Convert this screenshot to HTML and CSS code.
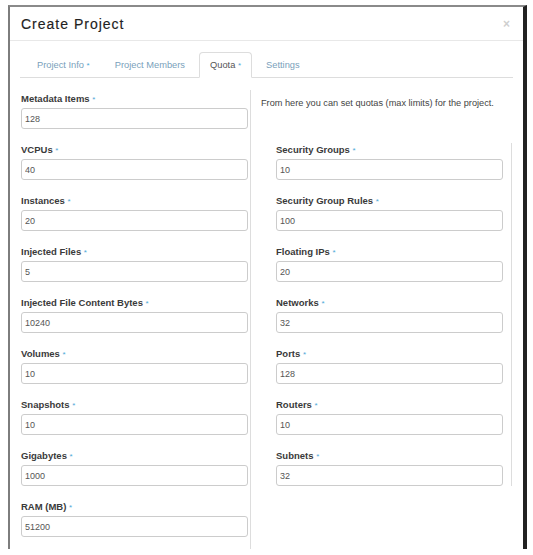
FILE: index.html
```html
<!DOCTYPE html>
<html>
<head>
<meta charset="utf-8">
<link rel="stylesheet" href="styles.css">
</head>
<body>
<div class="modal">
  <div class="modal-header">
    <h3 class="title">Create Project</h3>
    <span class="close">&times;</span>
  </div>
  <ul class="tabs">
    <li class="tab">Project Info <span class="req">*</span></li>
    <li class="tab">Project Members</li>
    <li class="tab active">Quota <span class="req">*</span></li>
    <li class="tab">Settings</li>
  </ul>
  <div class="content">
    <div class="col-left">
      <div class="group"><label class="label">Metadata Items <span class="req">*</span></label><input class="input" value="128"></div>
      <div class="group"><label class="label">VCPUs <span class="req">*</span></label><input class="input" value="40"></div>
      <div class="group"><label class="label">Instances <span class="req">*</span></label><input class="input" value="20"></div>
      <div class="group"><label class="label">Injected Files <span class="req">*</span></label><input class="input" value="5"></div>
      <div class="group"><label class="label">Injected File Content Bytes <span class="req">*</span></label><input class="input" value="10240"></div>
      <div class="group"><label class="label">Volumes <span class="req">*</span></label><input class="input" value="10"></div>
      <div class="group"><label class="label">Snapshots <span class="req">*</span></label><input class="input" value="10"></div>
      <div class="group"><label class="label">Gigabytes <span class="req">*</span></label><input class="input" value="1000"></div>
      <div class="group"><label class="label">RAM (MB) <span class="req">*</span></label><input class="input" value="51200"></div>
    </div>
    <div class="col-right">
      <p class="desc">From here you can set quotas (max limits) for the project.</p>
      <div class="fields">
        <div class="group"><label class="label">Security Groups <span class="req">*</span></label><input class="input" value="10"></div>
        <div class="group"><label class="label">Security Group Rules <span class="req">*</span></label><input class="input" value="100"></div>
        <div class="group"><label class="label">Floating IPs <span class="req">*</span></label><input class="input" value="20"></div>
        <div class="group"><label class="label">Networks <span class="req">*</span></label><input class="input" value="32"></div>
        <div class="group"><label class="label">Ports <span class="req">*</span></label><input class="input" value="128"></div>
        <div class="group"><label class="label">Routers <span class="req">*</span></label><input class="input" value="10"></div>
        <div class="group"><label class="label">Subnets <span class="req">*</span></label><input class="input" value="32"></div>
      </div>
    </div>
  </div>
</div>
</body>
</html>
```
FILE: styles.css
```css
html, body {
  margin: 0;
  padding: 0;
  background: #fff;
  font-family: "Liberation Sans", Arial, sans-serif;
}

.modal {
  margin: 5px 0 0 8px;
  width: 513px;
  height: 542px;
  border-top: 2px solid #8a8a8a;
  border-left: 2px solid #7d7d7d;
  border-right: 4px solid #222;
  display: flex;
  flex-direction: column;
  overflow: hidden;
  background: #fff;
}

.modal-header {
  height: 33px;
  border-bottom: 1px solid #e8e8e8;
  display: flex;
  align-items: center;
  justify-content: space-between;
  padding: 0 13px 0 11px;
  flex: none;
}

.title {
  margin: 0;
  font-size: 14px;
  font-weight: normal;
  letter-spacing: 1px;
  color: #222;
  -webkit-text-stroke: 0.15px #222;
}

.close {
  font-size: 12px;
  font-weight: bold;
  color: #cfcfcf;
  line-height: 1;
}

.tabs {
  list-style: none;
  margin: 11px 10px 0 10px;
  padding: 0 0 0 6px;
  display: flex;
  gap: 3px;
  border-bottom: 1px solid #ddd;
  height: 25px;
  flex: none;
}

.tab {
  font-size: 9.3px;
  color: #7a9fbb;
  padding: 0 10px;
  line-height: 24px;
  border: 1px solid transparent;
  border-radius: 4px 4px 0 0;
  margin-bottom: -1px;
}

.tab.active {
  color: #555;
  border-color: #ddd #ddd transparent #ddd;
  background: #fff;
}

.req {
  color: #4fa8d8;
  font-weight: normal;
  font-size: 8px;
  line-height: 0;
}

.content {
  flex: 1;
  display: flex;
  padding-top: 12px;
}

.col-left {
  width: 227px;
  padding: 2px 2px 0 11px;
  border-right: 1px solid #ddd;
  flex: none;
}

.col-right {
  flex: 1;
  padding-left: 10px;
}

.desc {
  margin: 7px 0 33px 0;
  font-size: 9.2px;
  line-height: 13px;
  color: #444;
}

.fields {
  margin: 0 11px 0 15px;
  padding-right: 8px;
  border-right: 1px solid #ddd;
}

.group {
  margin-bottom: 14px;
}

.label {
  display: block;
  height: 13px;
  font-size: 9.5px;
  font-weight: bold;
  line-height: 13px;
  color: #3a3a3a;
  margin-bottom: 3px;
}

.input {
  display: block;
  box-sizing: border-box;
  width: 100%;
  height: 21px;
  border: 1px solid #ccc;
  border-radius: 3px;
  padding: 0 3px;
  font-family: "Liberation Sans", Arial, sans-serif;
  font-size: 9px;
  color: #555;
  background: #fff;
  outline: none;
}
```
